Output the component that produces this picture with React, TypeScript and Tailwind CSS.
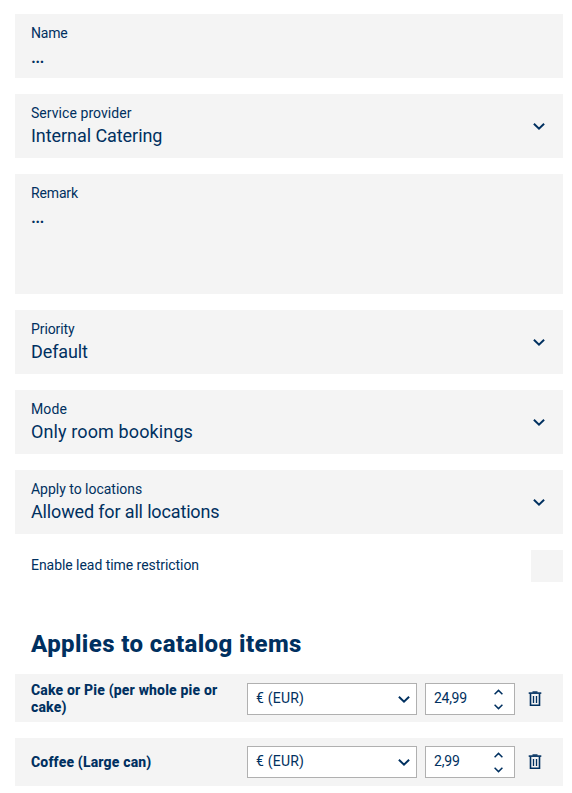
import React from "react";

function Chevron() {
  return (
    <svg width="12" height="8" viewBox="0 0 12 8" fill="none" className="shrink-0">
      <path d="M.9 1.7 6 6.6 11.1 1.7" stroke="#003060" strokeWidth="2" />
    </svg>
  );
}

function SmallChevron({ up = false }: { up?: boolean }) {
  return (
    <svg width="9" height="6" viewBox="0 0 9 6" fill="none">
      <path d={up ? "M.6 5.2 4.5 1.4 8.4 5.2" : "M.6 .8 4.5 4.6 8.4 .8"} stroke="#003060" strokeWidth="1.5" />
    </svg>
  );
}

function Trash() {
  return (
    <svg width="14" height="16" viewBox="0 0 14 16" fill="none" stroke="#003060">
      <path d="M4.5 1h5" strokeWidth="1.4" />
      <path d="M.7 2.1h12.6" strokeWidth="1.6" />
      <path d="M2.5 2.5v11.8h9V2.5" strokeWidth="1.6" />
      <path d="M5.5 5v7M8.5 5v7" strokeWidth="1.3" />
    </svg>
  );
}

type FieldProps = {
  label: string;
  value: string;
  labelSpacing?: string;
  valueSpacing?: string;
  select?: boolean;
  tall?: boolean;
};

function Field({ label, value, labelSpacing = "", valueSpacing = "", select = false, tall = false }: FieldProps) {
  return (
    <div className={`flex justify-between bg-[#f4f4f4] pl-4 pr-[18px] ${tall ? "h-[120px]" : "h-16"}`}>
      <div className="pt-[9px]">
        <div className={`text-sm leading-5 ${labelSpacing}`}>{label}</div>
        <div className={`text-lg leading-[26px] ${valueSpacing}`}>{value}</div>
      </div>
      {select && (
        <div className="flex items-center">
          <Chevron />
        </div>
      )}
    </div>
  );
}

type ItemProps = { name: string; price: string; priceSpacing?: string; offset?: string };

function Item({ name, price, priceSpacing = "", offset = "" }: ItemProps) {
  return (
    <div className="flex h-12 items-center bg-[#f4f4f4] pl-4">
      <div className="w-[216px] shrink-0 pr-6 pt-px text-sm font-extrabold leading-[17px] tracking-[0.17px]">{name}</div>
      <div className={`flex items-center ${offset}`}>
        <div className="flex h-8 w-[170px] items-center justify-between border border-[#b0b0b0] bg-white pl-2 pr-1.5">
          <span className="pb-0.5 text-sm leading-5 tracking-[0.2px]">€ (EUR)</span>
          <Chevron />
        </div>
        <div className="ml-2 flex h-8 w-[90px] items-center justify-between border border-[#b0b0b0] bg-white pl-2 pr-[11px]">
          <span className={`pb-0.5 text-sm leading-5 ${priceSpacing}`}>{price}</span>
          <div className="flex flex-col gap-[9px] pt-px">
            <SmallChevron up />
            <SmallChevron />
          </div>
        </div>
        <div className="ml-[13px]">
          <Trash />
        </div>
      </div>
    </div>
  );
}

export default function App() {
  return (
    <div className="h-[793px] overflow-hidden bg-white pl-[15px] pr-[9px] pt-[14px] font-[Roboto,sans-serif] text-[#003060]">
      <div className="flex flex-col gap-4">
        <Field label="Name" value="..." labelSpacing="tracking-[-0.2px]" valueSpacing="pt-px font-medium tracking-[-0.7px]" />
        <Field label="Service provider" value="Internal Catering" labelSpacing="tracking-[0.06px]" valueSpacing="tracking-[-0.06px]" select />
        <Field label="Remark" value="..." labelSpacing="tracking-[-0.15px]" valueSpacing="pt-px font-medium tracking-[-0.7px]" tall />
        <Field label="Priority" value="Default" labelSpacing="tracking-[-0.1px]" valueSpacing="tracking-[-0.1px]" select />
        <Field label="Mode" value="Only room bookings" labelSpacing="tracking-[0.1px]" valueSpacing="tracking-[0.12px]" select />
        <Field label="Apply to locations" value="Allowed for all locations" labelSpacing="tracking-[-0.02px]" valueSpacing="tracking-[-0.15px]" select />
        <div className="flex h-8 items-center justify-between pl-4">
          <span className="pb-0.5 text-sm leading-5 tracking-[-0.05px]">Enable lead time restriction</span>
          <div className="h-8 w-8 bg-[#f4f4f4]" />
        </div>
      </div>
      <h2 className="mt-[46px] h-[46px] pl-4 text-2xl font-extrabold leading-8 tracking-[0.4px]">Applies to catalog items</h2>
      <div className="flex flex-col gap-4">
        <Item name="Cake or Pie (per whole pie or cake)" price="24,99" priceSpacing="tracking-[-0.3px]" offset="pt-0.5" />
        <Item name="Coffee (Large can)" price="2,99" priceSpacing="tracking-[-0.2px]" />
      </div>
    </div>
  );
}
